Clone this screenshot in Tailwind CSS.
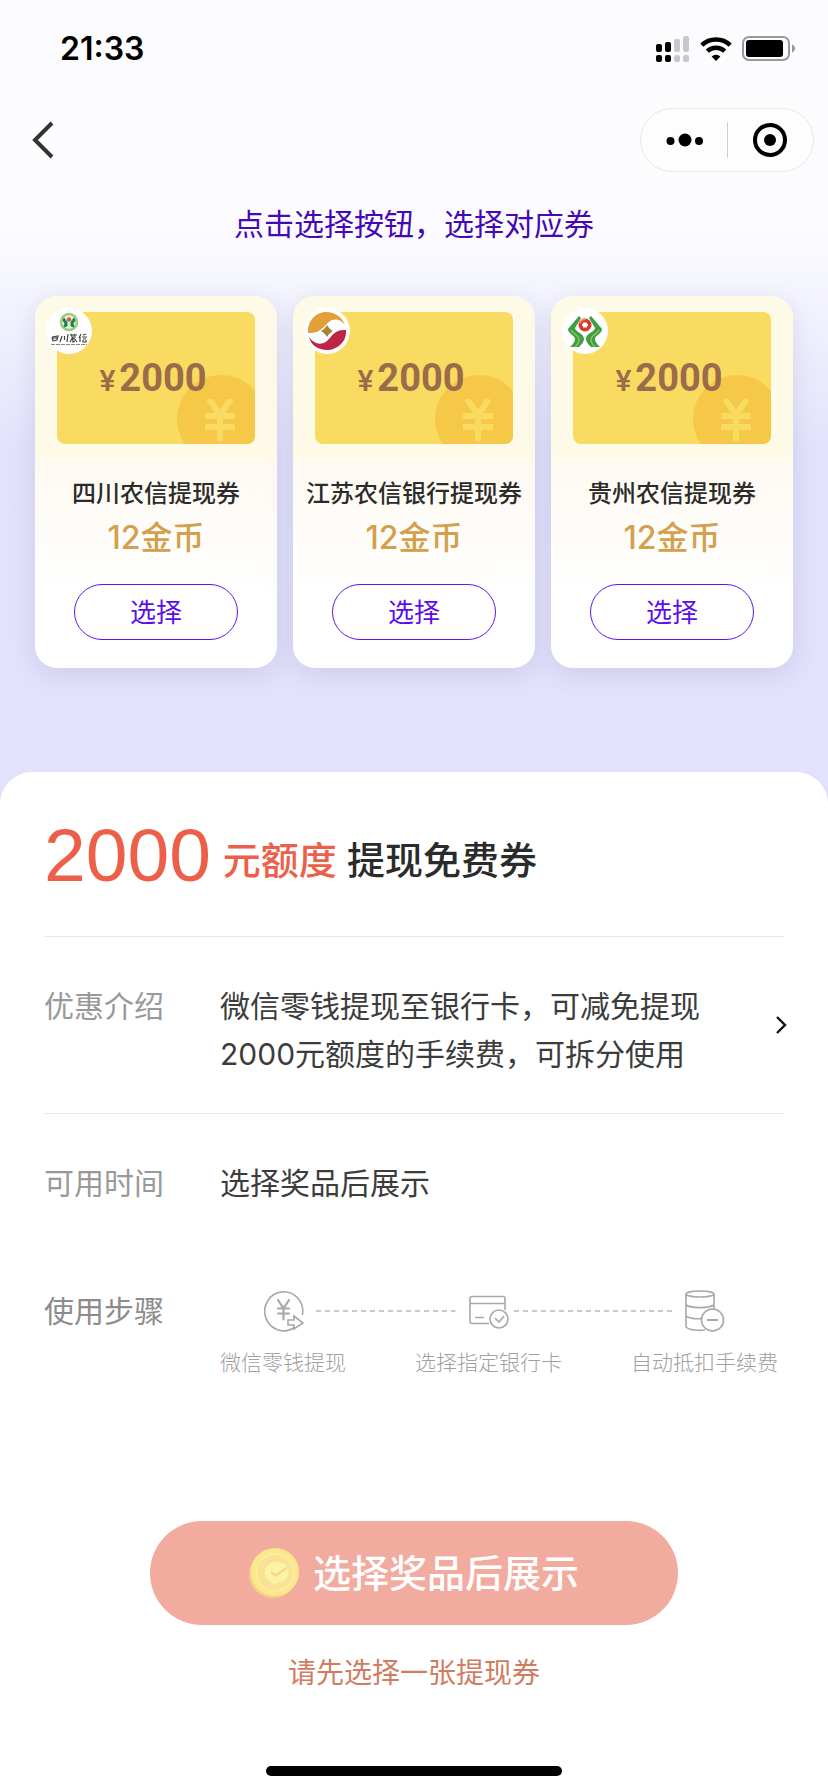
<!DOCTYPE html>
<html lang="zh-CN">
<head>
    <meta charset="UTF-8">
    <meta name="viewport" content="width=device-width, initial-scale=1.0">
    <title>提现免费券</title>
    <script src="https://cdn.jsdelivr.net/npm/@tailwindcss/browser@4"></script>
</head>
<body class="min-h-screen flex flex-col bg-white font-['Inter','Noto_Sans_CJK_SC',sans-serif] text-[#2b2b2b]">
    <div class="bg-linear-to-b from-[#fcfcff] from-28% to-[#e3e2fc] to-56%">
        <!-- Status bar -->
        <div class="flex items-center justify-between h-[98px] pl-[60px] pr-8">
            <span class="font-semibold text-[32px] text-black">21:33</span>
            <div class="flex items-center gap-[10px]">
                <svg class="w-[34px] h-[28px]" viewBox="0 0 34 28">
                    <g fill="#000">
                        <rect x="0" y="9" width="6" height="8" rx="2"/>
                        <rect x="9" y="7" width="6" height="10" rx="2"/>
                        <rect x="0" y="20" width="6" height="7" rx="2"/>
                        <rect x="9" y="20" width="6" height="7" rx="2"/>
                    </g>
                    <g fill="#c8c8ca">
                        <rect x="18" y="4" width="6" height="13" rx="2"/>
                        <rect x="27" y="1" width="6" height="16" rx="2"/>
                        <rect x="18" y="20" width="6" height="7" rx="2"/>
                        <rect x="27" y="20" width="6" height="7" rx="2"/>
                    </g>
                </svg>
                <svg class="w-[32px] h-[24px]" viewBox="0 0 32 24" fill="none" stroke="#000">
                    <path d="M1.800 8.200a20.500 20.500 0 0 1 28.400 0" stroke-width="4.600"/>
                    <path d="M7.300 14.200a12.600 12.600 0 0 1 17.400 0" stroke-width="4.400"/>
                    <path d="M16 24l-4.400-4.500a6.300 6.300 0 0 1 8.800 0z" fill="#000" stroke="none"/>
                </svg>
                <svg class="w-[54px] h-[26px]" viewBox="0 0 54 26">
                    <rect x="1" y="1" width="46" height="23" rx="6" fill="none" stroke="#98989c" stroke-width="2"/>
                    <rect x="4" y="4" width="37" height="17" rx="3" fill="#000"/>
                    <path d="M50 8.500c4 1.500 4 6.500 0 8z" fill="#98989c"/>
                </svg>
            </div>
        </div>

        <!-- Navigation -->
        <div class="flex items-center justify-between h-[84px] pl-8 pr-[14px]">
            <button aria-label="返回">
                <svg class="w-[22px] h-[38px]" viewBox="0 0 22 38" fill="none" stroke="#333" stroke-width="4">
                    <path d="M20 2L3 19l17 17"/>
                </svg>
            </button>
            <div class="flex items-center w-[174px] h-16 rounded-full border border-[#e9e9ec] bg-[#fdfdfe]">
                <button class="flex-1 flex justify-center" aria-label="更多">
                    <svg class="w-[38px] h-4" viewBox="0 0 38 16">
                        <circle cx="5.500" cy="9" r="4"/>
                        <circle cx="20" cy="8" r="6.500"/>
                        <circle cx="34" cy="9" r="4"/>
                    </svg>
                </button>
                <div class="w-px h-9 bg-[#cfcfd2]"></div>
                <button class="flex-1 flex justify-center" aria-label="关闭">
                    <svg class="w-[34px] h-[34px]" viewBox="0 0 34 34">
                        <circle cx="17" cy="17" r="15" fill="none" stroke="#000" stroke-width="4"/>
                        <circle cx="17" cy="17" r="6"/>
                    </svg>
                </button>
            </div>
        </div>

        <h1 class="mt-[18px] text-center text-[30px] leading-[48px] text-[#4508b5]">点击选择按钮，选择对应券</h1>

        <!-- Coupons -->
        <div class="grid grid-cols-3 gap-4 px-[35px] mt-12 pb-[136px]">
            <div class="flex flex-col items-center rounded-[22px] pb-7 bg-linear-to-b from-[#fefaf2] from-45% to-white to-80% shadow-[0_6px_24px_rgba(90,90,150,0.16)]">
                <div class="self-stretch rounded-t-[22px] bg-[#fdfae8] py-4 px-[22px]">
                    <div class="relative">
                        <div class="relative overflow-hidden h-[132px] rounded-lg bg-[#f8db60] flex items-center justify-center">
                            <div class="absolute left-[120px] top-[63px] w-[88px] h-[88px] rounded-full bg-[#f6c848] text-[#f8db60]">
                                <svg class="absolute left-[27px] top-6 w-8 h-[42px]" viewBox="0 0 32 42" fill="none" stroke="currentColor" stroke-width="6">
                                    <path d="M5 0l11 16L27 0M16 16v26M1 17h30M1 28h30"/>
                                </svg>
                            </div>
                            <div class="relative flex items-baseline gap-1 pr-[6px] text-[#9b6b4a] font-['Roboto',sans-serif] font-bold">
                                <span class="text-[30px] font-medium">¥</span>
                                <span class="text-[38px] leading-[48px]">2000</span>
                            </div>
                        </div>
                        <svg class="absolute -left-[11px] -top-1 w-[46px] h-[46px]" viewBox="0 0 46 46">
                            <circle cx="23" cy="23" r="23" fill="#fff"/>
                            <circle cx="23" cy="14" r="8" fill="#e4f1dc" stroke="#9ccb7c" stroke-width="2.500"/>
                            <path d="M18 10l3 4v4l-3 1 1-4-2-2zM28 10l-3 4v4l3 1-1-4 2-2z" fill="#16885a" stroke="#16885a"/>
                            <circle cx="23" cy="11.500" r="2.200" fill="#e0564e"/>
                            <g fill="none" stroke="#444" stroke-width="1.200">
                                <path d="M6 29l1 4M6 29l6-1-1 4-4 1M8 29v2M10 28v3"/>
                                <path d="M16 28l-2 6M18.500 28v4M22 26l-1 8"/>
                                <path d="M24 27h7M25 29h5M27 29l-3 5M27 30v4l2-1M28 30l3 4M25 26l1 2M29 26l-1 2"/>
                                <path d="M35 26l-2 4M34 29v5M37 27l3-1M36 29h5M37 31h3M37 32v2h3v-2"/>
                            </g>
                            <path d="M5 36.500h36" stroke="#888" stroke-width="1" stroke-dasharray="4 1"/>
                        </svg>
                    </div>
                </div>
                <h2 class="mt-[14px] text-[24px] leading-[40px] font-medium whitespace-nowrap">四川农信提现券</h2>
                <p class="text-[32px] leading-[48px] font-medium text-[#d3a04c]">12金币</p>
                <button class="mt-[22px] w-[164px] h-14 rounded-full border border-[#5b16e8] text-[26px] text-[#5b0fe8]">选择</button>
            </div>

            <div class="flex flex-col items-center rounded-[22px] pb-7 bg-linear-to-b from-[#fefaf2] from-45% to-white to-80% shadow-[0_6px_24px_rgba(90,90,150,0.16)]">
                <div class="self-stretch rounded-t-[22px] bg-[#fdfae8] py-4 px-[22px]">
                    <div class="relative">
                        <div class="relative overflow-hidden h-[132px] rounded-lg bg-[#f8db60] flex items-center justify-center">
                            <div class="absolute left-[120px] top-[63px] w-[88px] h-[88px] rounded-full bg-[#f6c848] text-[#f8db60]">
                                <svg class="absolute left-[27px] top-6 w-8 h-[42px]" viewBox="0 0 32 42" fill="none" stroke="currentColor" stroke-width="6">
                                    <path d="M5 0l11 16L27 0M16 16v26M1 17h30M1 28h30"/>
                                </svg>
                            </div>
                            <div class="relative flex items-baseline gap-1 pr-[6px] text-[#9b6b4a] font-['Roboto',sans-serif] font-bold">
                                <span class="text-[30px] font-medium">¥</span>
                                <span class="text-[38px] leading-[48px]">2000</span>
                            </div>
                        </div>
                        <svg class="absolute -left-[11px] -top-1 w-[46px] h-[46px]" viewBox="0 0 46 46">
                            <circle cx="23" cy="23" r="23" fill="#fff"/>
                            <path d="M4 25C3 13 12 4 22 4c9 0 16 5 19 13-5-6-11-7-16-3-6 5-9 12-21 11z" fill="#e59f38"/>
                            <path d="M42 22c1 12-9 20-19 20-9 0-16-5-18-13 5 7 12 9 18 4 5-5 8-12 19-11z" fill="#bd2546"/>
                            <path d="M23 17c2 3 3 4 6 6-3 2-4 3-6 6-2-3-3-4-6-6 3-2 4-3 6-6z" fill="#a4863a"/>
                        </svg>
                    </div>
                </div>
                <h2 class="mt-[14px] text-[24px] leading-[40px] font-medium whitespace-nowrap">江苏农信银行提现券</h2>
                <p class="text-[32px] leading-[48px] font-medium text-[#d3a04c]">12金币</p>
                <button class="mt-[22px] w-[164px] h-14 rounded-full border border-[#5b16e8] text-[26px] text-[#5b0fe8]">选择</button>
            </div>

            <div class="flex flex-col items-center rounded-[22px] pb-7 bg-linear-to-b from-[#fefaf2] from-45% to-white to-80% shadow-[0_6px_24px_rgba(90,90,150,0.16)]">
                <div class="self-stretch rounded-t-[22px] bg-[#fdfae8] py-4 px-[22px]">
                    <div class="relative">
                        <div class="relative overflow-hidden h-[132px] rounded-lg bg-[#f8db60] flex items-center justify-center">
                            <div class="absolute left-[120px] top-[63px] w-[88px] h-[88px] rounded-full bg-[#f6c848] text-[#f8db60]">
                                <svg class="absolute left-[27px] top-6 w-8 h-[42px]" viewBox="0 0 32 42" fill="none" stroke="currentColor" stroke-width="6">
                                    <path d="M5 0l11 16L27 0M16 16v26M1 17h30M1 28h30"/>
                                </svg>
                            </div>
                            <div class="relative flex items-baseline gap-1 pr-[6px] text-[#9b6b4a] font-['Roboto',sans-serif] font-bold">
                                <span class="text-[30px] font-medium">¥</span>
                                <span class="text-[38px] leading-[48px]">2000</span>
                            </div>
                        </div>
                        <svg class="absolute -left-[11px] -top-1 w-[46px] h-[46px]" viewBox="0 0 46 46">
                            <circle cx="23" cy="23" r="23" fill="#fff"/>
                            <path d="M17 8l2 2-6 10c0 4 9 5 9 11 0 3-3 6-5 8H8c3-3 5-5 5-8C13 27 6 26 6 21z" fill="#3d9e45"/>
                            <path d="M29 8l-2 2 6 10c0 4-9 5-9 11 0 3 3 6 5 8h9c-3-3-5-5-5-8 0-4 7-5 7-10z" fill="#3d9e45"/>
                            <path d="M9 22c2 4 8 5 8 10 0 3-2 5-4 7M37 22c-2 4-8 5-8 10 0 3 2 5 4 7" fill="none" stroke="#8fc24b" stroke-width="1.500"/>
                            <circle cx="23" cy="17" r="6.500" fill="#dc3a2c"/>
                            <path d="M17.500 15a6.500 6.500 0 0 1 6-4" fill="none" stroke="#f09a6c" stroke-width="2"/>
                            <path d="M21 14.500h4v5h-4zM20 16h6v2h-6z" fill="#fff"/>
                        </svg>
                    </div>
                </div>
                <h2 class="mt-[14px] text-[24px] leading-[40px] font-medium whitespace-nowrap">贵州农信提现券</h2>
                <p class="text-[32px] leading-[48px] font-medium text-[#d3a04c]">12金币</p>
                <button class="mt-[22px] w-[164px] h-14 rounded-full border border-[#5b16e8] text-[26px] text-[#5b0fe8]">选择</button>
            </div>
        </div>
    </div>

    <!-- Detail sheet -->
    <div class="relative flex-1 flex flex-col -mt-8 rounded-t-[32px] bg-white px-11">
        <div class="flex items-end pt-10 pb-[38px] border-b border-[#e8e8e8] text-[38px] leading-[76px] font-medium">
            <span class="font-['Liberation_Sans',sans-serif] text-[75px] leading-[86px] font-normal text-[#ee5f49]">2000</span>
            <span class="ml-3 text-[#ee5f49]">元额度</span>
            <span class="ml-[10px]">提现免费券</span>
        </div>

        <a href="#" class="flex items-center border-b border-[#e8e8e8] text-[30px] leading-[48px]">
            <span class="self-start shrink-0 w-44 pt-[45px] text-[#999]">优惠介绍</span>
            <span class="flex-1 pt-[45px] pb-[35px] text-[#3c3c3c]">微信零钱提现至银行卡，可减免提现2000元额度的手续费，可拆分使用</span>
            <svg class="w-3 h-[18px] ml-9 -mr-[3px]" viewBox="0 0 12 18" fill="none" stroke="#111" stroke-width="2.400">
                <path d="M2 1l8 8-8 8"/>
            </svg>
        </a>

        <div class="flex pt-[45px] text-[30px] leading-[48px]">
            <span class="shrink-0 w-44 text-[#999]">可用时间</span>
            <span class="text-[#3c3c3c]">选择奖品后展示</span>
        </div>

        <!-- Steps -->
        <div class="flex mt-20 text-[30px] leading-[48px]">
            <span class="shrink-0 w-44 text-[#8c8c8c]">使用步骤</span>
            <div class="flex-1 min-w-0 mr-[6px]">
                <div class="flex items-center h-12 pl-11 pr-[53px] text-[#a8a8a8]">
                    <svg class="shrink-0 w-10 h-[42px]" viewBox="0 0 40 42" fill="none" stroke="currentColor" stroke-width="1.600">
                        <path d="M38.400 25A19 19.500 0 1 0 31 37"/>
                        <path d="M14 10l5.500 8.500L25 10M19.500 18.500v11M14 18.500h11M14 23.500h11" stroke-width="2.200" stroke-linecap="round"/>
                        <path d="M24 30h6v-4l9 7-9 6v-4h-6z"/>
                    </svg>
                    <svg class="flex-14 w-0 h-[2px] mx-3" stroke="#c9c9c9" stroke-width="2" stroke-dasharray="5 4">
                        <line x1="0" y1="1" x2="100%" y2="1"/>
                    </svg>
                    <svg class="shrink-0 w-[42px] h-[42px]" viewBox="0 0 42 42" fill="none" stroke="currentColor" stroke-width="1.600">
                        <path d="M21 33.500H4a2 2 0 0 1-2-2v-23a2 2 0 0 1 2-2h31a2 2 0 0 1 2 2V20M2 13.500h35M7 27.500h9"/>
                        <circle cx="31" cy="29" r="9"/>
                        <path d="M27 28l4 4 5-6"/>
                    </svg>
                    <svg class="flex-16 w-0 h-[2px] ml-1 mr-3" stroke="#c9c9c9" stroke-width="2" stroke-dasharray="5 4">
                        <line x1="0" y1="1" x2="100%" y2="1"/>
                    </svg>
                    <svg class="shrink-0 w-10 h-[42px]" viewBox="0 0 40 42" fill="none" stroke="currentColor" stroke-width="1.600">
                        <ellipse cx="15" cy="4" rx="14" ry="3"/>
                        <path d="M1 4v33c3 3 13 4 19 3M29 4v15M1 15c5 3.500 22 3.500 28 0M1 26c4 2.500 10 3 15 2.500"/>
                        <circle cx="27.500" cy="30" r="11"/>
                        <path d="M22 30h11" stroke-width="2"/>
                    </svg>
                </div>
                <div class="flex justify-between mt-3 text-[21px] leading-8 font-light text-[#a0a0a0]">
                    <span>微信零钱提现</span>
                    <span>选择指定银行卡</span>
                    <span>自动抵扣手续费</span>
                </div>
            </div>
        </div>

        <button class="flex items-center justify-center gap-[14px] self-center mt-[142px] w-[528px] max-w-full h-[104px] rounded-full bg-[#f2ab9f] text-white text-[38px] font-medium">
            <svg class="w-[50px] h-[50px]" viewBox="0 0 50 50">
                <circle cx="24" cy="26" r="24" fill="#f6cf86"/>
                <circle cx="26" cy="24" r="24" fill="#fbe88c"/>
                <circle cx="26" cy="24.500" r="18.500" fill="#fae294" stroke="#fbee9f" stroke-width="1.500"/>
                <path d="M28 14c7 0 11.500 4 11.500 10S35 34 29 34.500L23 37v-3c-4-1-7-5-7-9.500C16 18 21 14 28 14z" fill="#fdf3a6"/>
                <path d="M22 24l4.500 3.500L38 20" fill="none" stroke="#f5da83" stroke-width="2.500"/>
            </svg>
            选择奖品后展示
        </button>
        <p class="mt-7 text-center text-[28px] leading-10 text-[#cf7c62]">请先选择一张提现券</p>

        <div class="self-center mt-auto mb-4 w-[296px] h-[10px] rounded-full bg-black"></div>
    </div>
</body>
</html>
